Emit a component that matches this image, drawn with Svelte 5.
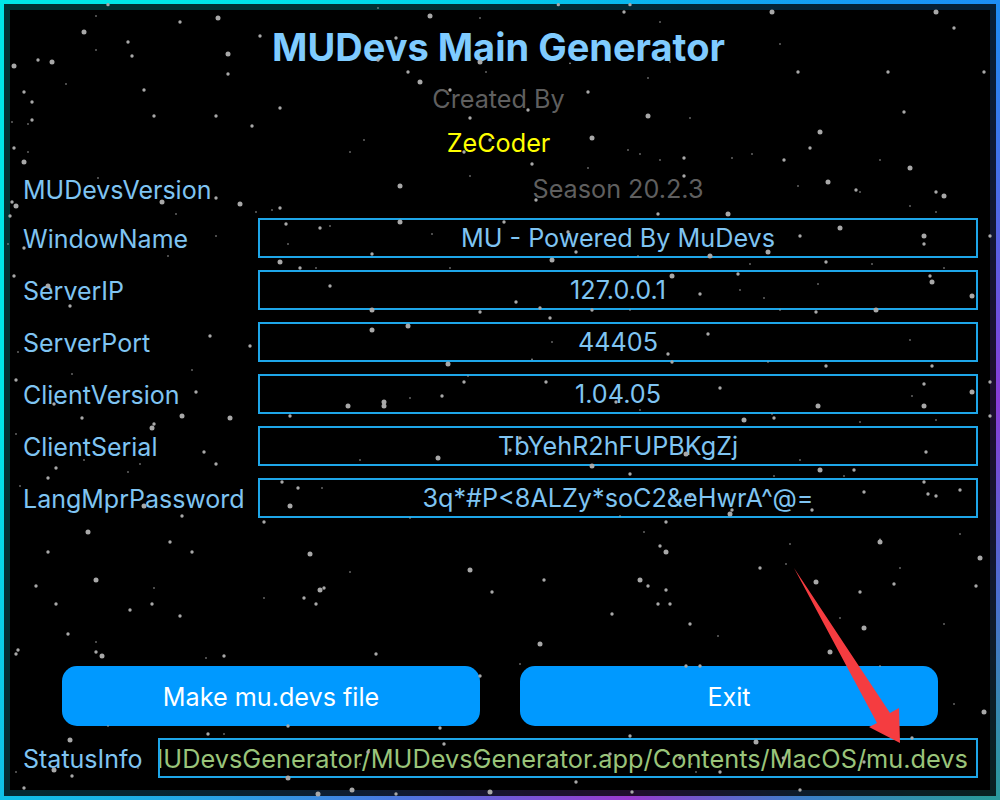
<script>
	const rows = [
		{ label: 'WindowName', value: 'MU - Powered By MuDevs' },
		{ label: 'ServerIP', value: '127.0.0.1' },
		{ label: 'ServerPort', value: '44405' },
		{ label: 'ClientVersion', value: '1.04.05' },
		{ label: 'ClientSerial', value: 'TbYehR2hFUPBKgZj' },
		{ label: 'LangMprPassword', value: '3q*#P<8ALZy*soC2&eHwrA^@=' }
	];

	// star positions as read off the 3x crops: x y size, per crop offset
	const groups = [
		[0, 0, '288 48 1,540 66 2,654 54 3,252 96 3,780 108 2,384 126 2,288 150 1,684 162 3,114 180 2,156 186 3,396 168 2,42 198 3,684 222 2,198 252 1,72 276 2,432 270 2,96 306 2,96 360 2,36 366 1,84 372 1,462 348 2,648 348 2,756 378 2,840 324 2,1290 48 3,1440 54 1,1134 24 1,324 14 2,1188 114 2,1134 180 2,1440 186 3,1224 216 2,1458 216 1,1260 246 3,1350 270 2,1410 354 2,1092 420 1,1050 456 1,42 444 2,84 456 1,72 486 3,1392 456 2,1470 420 2,1410 528 1,1200 558 3,294 534 1,648 594 2,486 606 3,720 612 3,36 606 2,48 618 3,30 648 2,528 642 1,768 636 1,816 630 1,840 624 2,858 672 2,960 684 2,990 678 1,1200 666 3,864 732 1,1296 702 1,648 708 1,72 744 2,504 768 1,1116 762 2,840 786 3,900 804 2,948 804 1,1350 804 1,42 828 2,24 732 1'],
		[500, 0, '372 36 2,816 36 3,1308 36 3,175 14 2,390 14 2,480 66 1,1362 84 2,840 132 1,894 216 2,1164 216 2,1452 216 2,210 190 1,510 186 1,444 234 1,264 276 2,1212 336 2,444 348 3,570 354 1,84 330 2,960 396 3,930 444 2,276 414 3,384 450 1,420 462 1,552 474 2,756 462 1,852 480 2,696 474 1,480 480 1,1140 480 1,96 492 2,264 504 1,1230 504 3,552 528 2,984 546 3,894 558 1,1068 570 2,1080 576 1,1308 576 2,1332 588 3,108 600 2,1230 618 1,1308 636 1,474 642 2,684 642 3,12 666 2,1020 684 3,900 708 2,1272 708 3,1272 732 2,1470 708 2,204 696 2,228 756 2,804 756 3,630 768 3,156 780 3,978 786 2,1116 792 1,750 792 1,516 828 3,714 822 2,1332 804 1,1290 828 2,414 768 1'],
		[0, 280, '144 18 3,990 18 2,210 78 2,1116 90 3,1440 96 2,630 168 2,750 198 2,54 216 1,1116 150 3,1224 138 3,1344 252 3,576 270 1,216 282 1,48 300 2,1392 306 2,1404 288 1,588 336 2,1326 348 2,1044 378 3,1152 366 3,1152 378 3,1230 354 1,162 372 2,246 414 2,546 408 3,690 414 3,870 408 2,462 432 2,456 444 3,48 462 1,612 516 2,1314 534 3,1080 540 1,252 540 1,648 552 2,420 552 1,168 564 2,384 576 1,144 594 2,60 618 1,846 606 2,894 624 2,966 624 1,870 678 3,432 678 3,546 708 2,1230 714 1,792 726 2,264 756 3'],
		[500, 280, '48 66 2,120 84 2,276 90 2,390 90 1,600 42 2,720 30 1,792 54 1,954 12 1,1296 6 3,1416 48 3,948 96 2,1128 90 3,840 90 1,150 114 2,624 162 2,156 186 1,504 222 2,96 238 1,516 246 2,804 246 1,1230 180 1,978 258 2,1296 258 2,138 306 2,660 324 2,348 366 2,420 390 1,954 378 3,1272 312 2,1236 348 1,1272 378 3,1416 336 3,1470 306 2,1470 408 2,732 420 3,816 402 1,822 414 2,1080 426 1,1308 420 1,60 474 2,30 510 2,90 516 1,558 522 3,1278 516 2,900 540 1,276 558 3,390 582 2,960 570 3,1062 570 2,822 588 1,1032 588 1,1272 606 2,1092 636 2,1380 630 2,1284 642 2,1308 648 2,570 648 2,696 690 2,690 702 3,936 690 2,360 708 1,498 726 2,432 756 1,1380 762 1,1140 778 1'],
		[0, 540, '510 6 2,144 36 2,576 36 2,930 42 3,1050 96 1,1410 90 3,1476 156 2,108 138 2,288 120 3,462 144 1,972 144 2,960 150 3,168 192 2,456 192 2,390 210 2,792 174 1,912 174 2,948 192 2,540 228 2,204 282 2,288 306 1,54 330 2,48 342 2,288 336 2,306 348 3,618 354 1,672 348 2,1128 342 2,1440 408 2,324 558 1,864 558 2,1320 564 2,624 582 2,672 582 1,210 600 3,1332 612 2,1104 636 2,1440 654 2,162 690 3,48 696 1,216 708 2,864 714 3,72 744 2,954 762 3,1056 750 3,1188 762 2,1470 756 3,414 684 1,1080 672 1'],
		[500, 540, '480 18 2,498 36 3,870 12 1,1140 6 3,1440 54 3,858 72 1,780 84 2,1200 84 1,132 120 2,420 120 3,444 138 2,948 126 3,498 150 2,1080 156 2,1182 132 2,1428 138 2,474 192 2,510 192 2,336 222 2,570 252 2,1020 234 1,1332 252 1,1092 264 3,654 288 1,120 312 3,990 336 3,60 372 1,558 378 2,600 378 2,1140 378 1,1362 492 1,1452 516 3,390 588 2,768 606 3,1236 594 2,228 726 2,396 756 2,900 750 2,330 642 2,540 654 2,850 654 2,1092 666 2,575 672 1,588 696 1,660 696 2,1080 680 1']
	];
	const radius = { 1: 0.8, 2: 1.7, 3: 2.5 };
	const stars = groups.flatMap(([dx, dy, list]) =>
		list.split(',').map((s) => {
			const [x, y, size] = s.split(' ').map(Number);
			return { x: dx + x / 3, y: dy + y / 3, r: radius[size] };
		})
	);
</script>

<div class="frame">
	<div class="glow">
		<div class="panel">
			<h1>MUDevs Main Generator</h1>
			<p class="created">Created By</p>
			<p class="author">ZeCoder</p>

			<div class="row version">
				<span class="label">MUDevsVersion</span>
				<span class="season">Season 20.2.3</span>
			</div>

			<div class="fields">
				{#each rows as row (row.label)}
					<div class="row">
						<span class="label">{row.label}</span>
						<div class="field">{row.value}</div>
					</div>
				{/each}
			</div>

			<div class="actions">
				<button>Make mu.devs file</button>
				<button>Exit</button>
			</div>

			<div class="status">
				<span class="label">StatusInfo</span>
				<div class="field path">
					<span>MUDevsGenerator/MUDevsGenerator.app/Contents/MacOS/mu.devs</span>
				</div>
			</div>
		</div>
	</div>

	<svg class="stars" viewBox="0 0 1000 800" aria-hidden="true">
		{#each stars as s}
			<circle cx={s.x} cy={s.y} r={s.r} />
		{/each}
	</svg>

	<!-- annotation arrow pasted over the screenshot -->
	<svg class="arrow" viewBox="0 0 1000 800" aria-hidden="true">
		<path d="M794 568 L890 713 L899 708 L900 743 L869 727 L877 723 Z" />
	</svg>
</div>

<style>
	:global(body) {
		margin: 0;
		background: #000;
	}

	.frame {
		position: relative;
		width: 1000px;
		height: 800px;
		box-sizing: border-box;
		padding: 4px;
		overflow: hidden;
		font-family: Inter, 'Liberation Sans', sans-serif;
		background: conic-gradient(
			from 0deg,
			#00cdea 0deg,
			#1a90f5 50deg,
			#8a3cd8 90deg,
			#4a70d0 112deg,
			#2a9a9a 129deg,
			#3a80c8 142deg,
			#9a3ad0 162deg,
			#4a78e0 195deg,
			#10c0e8 231deg,
			#00e8e8 270deg,
			#00e8e8 320deg,
			#00cdea 360deg
		);
	}

	.glow {
		height: 100%;
		box-sizing: border-box;
		padding: 6px;
		background: rgba(0, 0, 0, 0.78);
	}

	.panel {
		position: relative;
		z-index: 1;
		height: 100%;
		box-sizing: border-box;
		display: flex;
		flex-direction: column;
		padding: 15px 12px 12px 13px;
		background: #000;
	}

	.stars,
	.arrow {
		position: absolute;
		inset: 0;
		width: 1000px;
		height: 800px;
		pointer-events: none;
	}

	.stars {
		z-index: 2;
	}

	.stars circle {
		fill: #a8a8a8;
	}

	.arrow {
		z-index: 4;
	}

	.arrow path {
		fill: #f53c40;
	}

	h1 {
		margin: 0;
		height: 44px;
		line-height: 44px;
		padding-right: 4px;
		font-size: 38px;
		font-weight: 700;
		text-align: center;
		color: #7fcbff;
		position: relative;
		z-index: 3;
	}

	.created,
	.author {
		margin: 0;
		height: 40px;
		line-height: 40px;
		padding-right: 4px;
		font-size: 25.2px;
		text-align: center;
		position: relative;
		z-index: 3;
	}

	.created {
		margin-top: 10px;
		color: #5f5f5f;
	}

	.author {
		margin-top: 4px;
		color: #ffff00;
	}

	.row {
		display: grid;
		grid-template-columns: 235px 1fr;
		height: 40px;
		align-items: center;
		position: relative;
		z-index: 3;
	}

	.version {
		margin-top: 6px;
	}

	.season {
		text-align: center;
		font-size: 25.2px;
		color: #5f5f5f;
	}

	.fields {
		display: flex;
		flex-direction: column;
		gap: 12px;
		margin-top: 9px;
	}

	.label {
		padding-top: 2px;
		font-size: 25px;
		color: #7fc4f2;
	}

	.field {
		box-sizing: border-box;
		height: 40px;
		line-height: 37px;
		border: 2px solid #1ea6e8;
		font-size: 25.2px;
		text-align: center;
		color: #7fc4f2;
	}

	.actions {
		display: flex;
		gap: 40px;
		margin-top: auto;
		padding-left: 39px;
		position: relative;
		z-index: 3;
	}

	button {
		width: 418px;
		height: 60px;
		padding: 2px 0 0;
		border: 0;
		border-radius: 15px;
		background: #0099ff;
		color: #fff;
		font: inherit;
		font-size: 25.2px;
	}

	.status {
		display: grid;
		grid-template-columns: 135px 1fr;
		align-items: center;
		margin-top: 12px;
		position: relative;
		z-index: 3;
	}

	.path {
		display: flex;
		justify-content: flex-end;
		overflow: hidden;
		padding-right: 8px;
		white-space: nowrap;
		font-size: 25.35px;
		color: #9ac47a;
	}

	.path span {
		flex: none;
	}
</style>
